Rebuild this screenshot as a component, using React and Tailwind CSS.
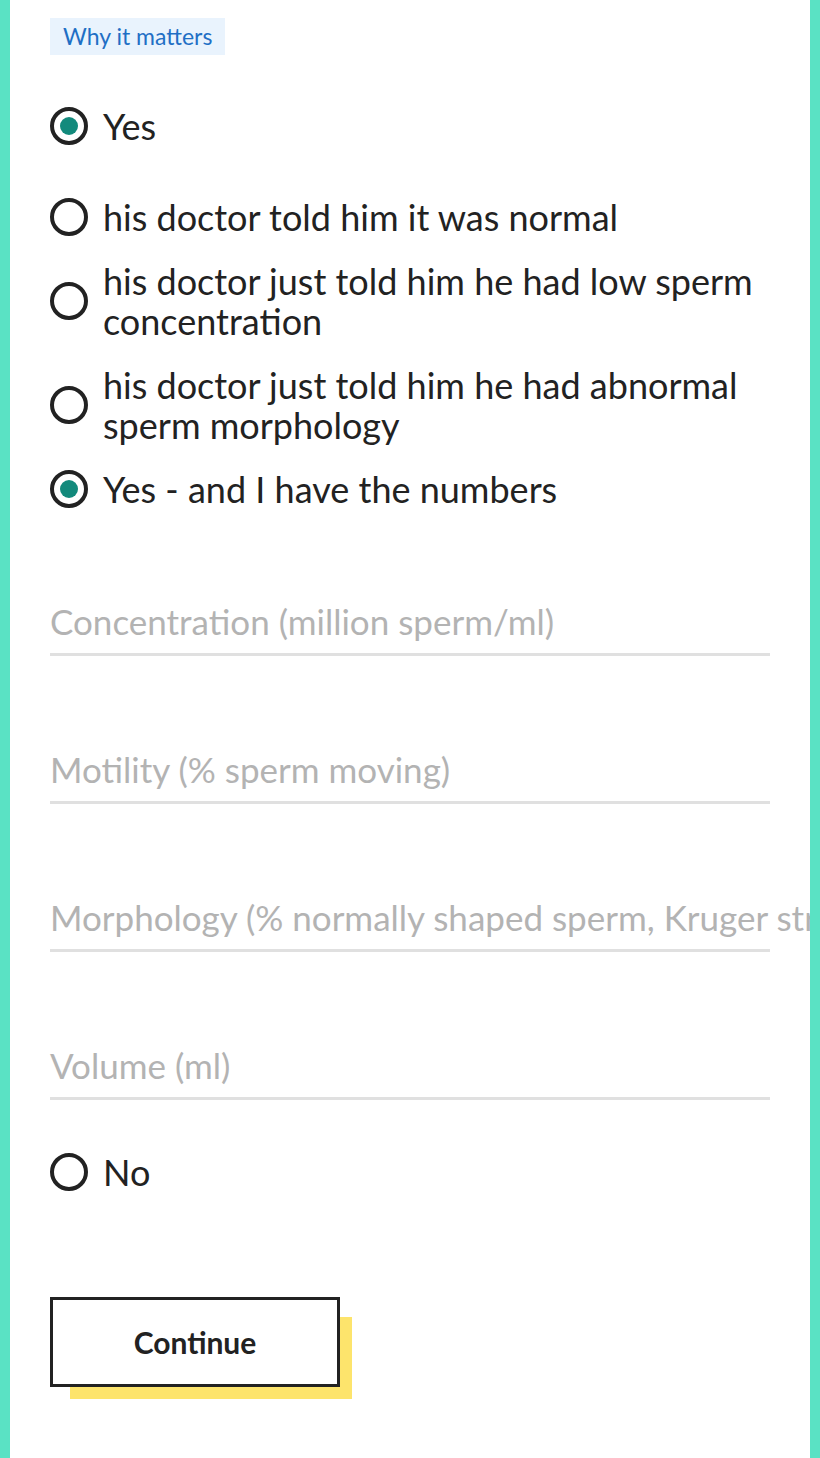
const options = [
  { label: 'his doctor told him it was normal', checked: false },
  { label: 'his doctor just told him he had low sperm concentration', checked: false },
  { label: 'his doctor just told him he had abnormal sperm morphology', checked: false },
  { label: 'Yes - and I have the numbers', checked: true },
];

const fields = [
  'Concentration (million sperm/ml)',
  'Motility (% sperm moving)',
  'Morphology (% normally shaped sperm, Kruger strict)',
  'Volume (ml)',
];

const Radio = ({ checked }) => (
  <span className="shrink-0 w-[38px] h-[38px] rounded-full border-[4px] border-[#222] flex items-center justify-center">
    {checked && <span className="w-[18px] h-[18px] rounded-full bg-[#138a7c]"></span>}
  </span>
);

const Option = ({ label, checked, className = '' }) => (
  <label className={`flex items-center gap-[15px] ${className}`}>
    <Radio checked={checked} />
    <span className="text-[36px] leading-[40px] text-[#222]">{label}</span>
  </label>
);

export default function App() {
  return (
    <div
      className="relative w-[820px] h-[1458px] overflow-hidden bg-white border-l-[10px] border-r-[10px] border-[#5ae2c4]"
      style={{ fontFamily: 'Lato, "Open Sans", sans-serif' }}
    >
      <div className="pl-[40px] pr-[30px] pt-[18px]">
        <span className="inline-block bg-[#e9f3fd] text-[#1f6fc5] text-[23px] leading-[37px] px-[13px]">
          Why it matters
        </span>

        <Option label="Yes" checked className="mt-[51px]" />

        <div className="mt-[51px] flex flex-col gap-[24px]">
          {options.map((o) => (
            <Option key={o.label} label={o.label} checked={o.checked} />
          ))}
        </div>

        <div className="mt-[92px] flex flex-col gap-[93px]">
          {fields.map((f) => (
            <div key={f} className="w-[720px]">
              <div className="text-[35px] leading-[40px] text-[#b3b3b3] whitespace-nowrap">{f}</div>
              <div className="mt-[12px] h-[3px] bg-[#e0e0e0]"></div>
            </div>
          ))}
        </div>

        <Option label="No" className="mt-[52px]" />

        <button className="mt-[105px] w-[290px] h-[90px] bg-white border-[3px] border-[#222] text-[30px] font-bold text-[#222] shadow-[16px_16px_0_-4px_#fde46c]">
          Continue
        </button>
      </div>
    </div>
  );
}
